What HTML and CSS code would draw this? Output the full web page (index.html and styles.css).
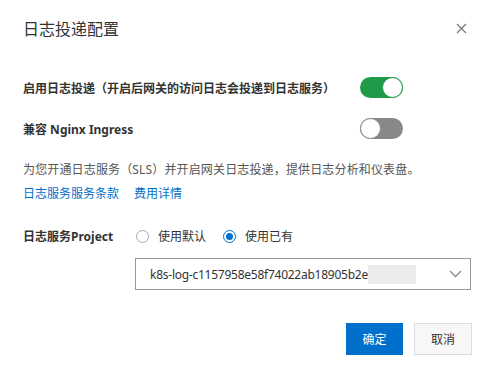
FILE: index.html
```html
<!DOCTYPE html>
<html>
<head>
<meta name="viewport" content="width=device-width, initial-scale=1">
<link rel="stylesheet" href="styles.css">
</head>
<body>

<div class="dialog">
  <div class="dialog-header">
    <h2 class="title">日志投递配置</h2>
    <span class="close">
      <svg width="11" height="11" viewBox="0 0 11 11"><path d="M1 1L10 10M10 1L1 10" stroke="#777" stroke-width="1.2" fill="none"/></svg>
    </span>
  </div>

  <div class="dialog-body">
    <div class="switch-row first">
      <span class="label">启用日志投递（开启后网关的访问日志会投递到日志服务）</span>
      <span class="switch on"><span class="knob"></span></span>
    </div>
    <div class="switch-row">
      <span class="label">兼容 Nginx Ingress</span>
      <span class="switch"><span class="knob"></span></span>
    </div>

    <p class="desc">为您开通日志服务（SLS）并开启网关日志投递，提供日志分析和仪表盘。</p>
    <div class="links">
      <a class="link">日志服务服务条款</a>
      <a class="link">费用详情</a>
    </div>

    <div class="form-item">
      <span class="label form-label">日志服务Project</span>
      <div class="radios">
        <span class="radio"><span class="dot"></span>使用默认</span>
        <span class="radio checked"><span class="dot"></span>使用已有</span>
      </div>
    </div>
    <div class="select">
      <span class="value">k8s-log-c1157958e58f74022ab18905b2e<span class="mask"></span></span>
      <svg width="13" height="8" viewBox="0 0 13 8"><path d="M1 1L6.5 6.5L12 1" stroke="#888" stroke-width="1.3" fill="none"/></svg>
    </div>
  </div>

  <div class="dialog-footer">
    <span class="btn primary">确定</span>
    <span class="btn">取消</span>
  </div>
</div>

</body>
</html>
```

FILE: styles.css
```css
body {
  margin: 0;
  background: #fff;
}

* {
  box-sizing: border-box;
  font-family: "Noto Sans", "Noto Sans CJK SC", sans-serif;
}

/* Header with title and close icon */
.dialog-header {
  height: 56px;
  padding: 0 24px 0 23px;
  display: flex;
  align-items: center;
  justify-content: space-between;
}

.title {
  margin: 0;
  font-size: 16px;
  font-weight: normal;
  color: #333;
}

.close {
  display: flex;
  cursor: pointer;
}

.dialog-body {
  padding: 0 20px 0 23px;
}

/* Switch rows */
.switch-row {
  width: 380px;
  height: 21px;
  display: flex;
  align-items: center;
  justify-content: space-between;
  margin-top: 20px;
}

.switch-row.first {
  margin-top: 21px;
}

.label {
  font-size: 12px;
  font-weight: bold;
  color: #333;
}

.switch {
  width: 43px;
  height: 21px;
  border-radius: 11px;
  background: #888;
  position: relative;
}

.switch .knob {
  position: absolute;
  top: 0;
  left: 0;
  width: 21px;
  height: 21px;
  border-radius: 50%;
  background: #fff;
  border: 1px solid #888;
}

.switch.on {
  background: #1f9a48;
}

.switch.on .knob {
  left: 22px;
  border-color: #1f9a48;
}

/* Description and links */
.desc {
  margin: 22px 0 0;
  font-size: 12px;
  line-height: 18px;
  color: #555;
  letter-spacing: 0.15px;
}

.links {
  margin-top: 6px;
  display: flex;
  gap: 15px;
  font-size: 12px;
  line-height: 18px;
}

.link {
  color: #0070cc;
  cursor: pointer;
}

/* Project form item */
.form-item {
  margin-top: 23px;
  display: flex;
  align-items: center;
  height: 20px;
}

.form-label {
  width: 113px;
}

.radios {
  display: flex;
  gap: 17px;
}

.radio {
  display: flex;
  align-items: center;
  gap: 9px;
  font-size: 12px;
  color: #333;
}

.radio .dot {
  width: 13px;
  height: 13px;
  border-radius: 50%;
  border: 1px solid #aaa;
  background: #fff;
  position: relative;
}

.radio.checked .dot {
  border-color: #0070cc;
}

.radio.checked .dot::after {
  content: "";
  position: absolute;
  top: 2px;
  left: 2px;
  width: 7px;
  height: 7px;
  border-radius: 50%;
  background: #0070cc;
}

.select {
  margin: 12px 0 0 112px;
  width: 336px;
  height: 32px;
  border: 1px solid #999;
  display: flex;
  align-items: center;
  justify-content: space-between;
  padding: 0 8px 0 14px;
}

.select .value {
  display: flex;
  align-items: center;
  font-size: 12px;
  color: #333;
  letter-spacing: -0.25px;
}

.mask {
  display: inline-block;
  width: 48px;
  height: 19px;
  background: #ececec;
}

/* Footer buttons */
.dialog-footer {
  margin-top: 33px;
  padding: 0 19px 0 0;
  display: flex;
  justify-content: flex-end;
  gap: 11px;
}

.btn {
  width: 58px;
  height: 32px;
  display: flex;
  align-items: center;
  justify-content: center;
  font-size: 12px;
  color: #333;
  background: #f7f7f7;
  border: 1px solid #ddd;
  cursor: pointer;
}

.btn.primary {
  width: 57px;
  background: #0070cc;
  border-color: #0070cc;
  color: #fff;
}
```
